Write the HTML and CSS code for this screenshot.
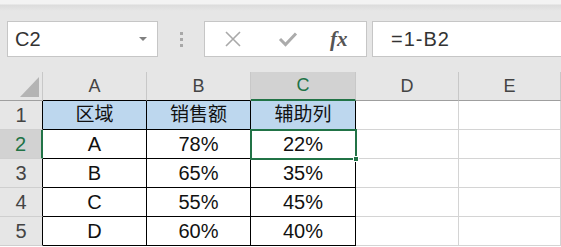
FILE: index.html
```html
<!DOCTYPE html>
<html lang="zh-CN">
 <head>
  <meta charset="utf-8">
  <title>辅助列</title>
  <link rel="stylesheet" href="styles.css">
 </head>
 <body>
  <div class="bar">
	<div class="namebox">
		<span class="ref">C2</span>
		<span class="drop"></span>
	</div>
	<div class="grip"><i></i><i></i><i></i></div>
	<div class="tools">
		<svg class="ico" width="18" height="18" viewBox="0 0 18 18"><path d="M2 2L16 16M16 2L2 16" stroke="#a9a9a9" stroke-width="1.6" fill="none"/></svg>
		<svg class="ico" width="20" height="18" viewBox="0 0 20 18"><path d="M2 9L7.5 14.5L18 3.5" stroke="#ababab" stroke-width="3" fill="none"/></svg>
		<span class="fx">fx</span>
	</div>
	<div class="formula">=1-B2</div>
  </div>
  <div class="sheet">
	<div class="corner"><span></span></div>
	<div class="col">A</div>
	<div class="col">B</div>
	<div class="col on">C</div>
	<div class="col">D</div>
	<div class="col">E</div>

	<div class="row">1</div>
	<div class="c t hd">区域</div>
	<div class="c t hd">销售额</div>
	<div class="c t hd">辅助列</div>
	<div class="c"></div>
	<div class="c"></div>

	<div class="row on">2</div>
	<div class="c t">A</div>
	<div class="c t">78%</div>
	<div class="c t sel">22%<span class="handle"></span></div>
	<div class="c"></div>
	<div class="c"></div>

	<div class="row">3</div>
	<div class="c t">B</div>
	<div class="c t">65%</div>
	<div class="c t">35%</div>
	<div class="c"></div>
	<div class="c"></div>

	<div class="row">4</div>
	<div class="c t">C</div>
	<div class="c t">55%</div>
	<div class="c t">45%</div>
	<div class="c"></div>
	<div class="c"></div>

	<div class="row">5</div>
	<div class="c t">D</div>
	<div class="c t">60%</div>
	<div class="c t">40%</div>
	<div class="c"></div>
	<div class="c"></div>
  </div>
 </body>
</html>
```

FILE: styles.css
```css
*{margin:0;padding:0;box-sizing:border-box;}
body{
	width:561px;
	height:247px;
	overflow:hidden;
	background:#fff;
	font-family:"Liberation Sans","Noto Sans CJK SC",sans-serif;
}
.bar{
	height:72px;
	background:linear-gradient(#f3f3f3 0,#f3f3f3 4px,#dcdcdc 5px,#e6e6e6 11px,#e6e6e6 100%);
	display:flex;
	align-items:flex-start;
	padding-top:21px;
	padding-left:7px;
}
.namebox{
	width:151px;
	height:36px;
	background:#fff;
	border:1px solid #c6c6c6;
	display:flex;
	align-items:center;
	justify-content:space-between;
	padding:0 10px 0 7px;
}
.ref{
	font-size:20px;
	color:#333;
}
.drop{
	width:0;
	height:0;
	border-left:4px solid transparent;
	border-right:4px solid transparent;
	border-top:4px solid #808080;
}
.grip{
	width:46px;
	height:36px;
	display:flex;
	flex-direction:column;
	align-items:center;
	justify-content:center;
	gap:3px;
}
.grip i{
	display:block;
	width:3px;
	height:3px;
	background:#a8a8a8;
}
.tools{
	width:163px;
	height:36px;
	background:#fff;
	border:1px solid #c6c6c6;
	display:flex;
	align-items:center;
	padding-left:19px;
	gap:36px;
}
.fx{
	font-family:"Liberation Serif",serif;
	font-style:italic;
	font-weight:bold;
	font-size:21px;
	color:#555;
	margin-left:-4px;
}
.formula{
	margin-left:5px;
	flex:1;
	height:36px;
	background:#fff;
	border:1px solid #c6c6c6;
	border-right:none;
	font-size:20px;
	letter-spacing:1px;
	color:#333;
	line-height:34px;
	padding-left:18px;
}
.sheet{
	display:grid;
	grid-template-columns:43px 104px 104px 105px 103px 1fr;
	grid-template-rows:repeat(6,29px);
	background:#fff;
}
.sheet > div{
	border-right:1px solid #d4d4d4;
	border-bottom:1px solid #d4d4d4;
}
.corner{
	background:#e6e6e6;
	position:relative;
	border-bottom-color:#9f9f9f !important;
	border-right-color:#c8c8c8 !important;
}
.corner span{
	position:absolute;
	right:3px;
	bottom:3px;
	width:0;
	height:0;
	border-left:19px solid transparent;
	border-bottom:20px solid #b4b4b4;
}
.col{
	background:#e6e6e6;
	border-bottom-color:#9f9f9f !important;
	border-right-color:#c8c8c8 !important;
	text-align:center;
	font-size:18px;
	line-height:28px;
	color:#444;
}
.col:nth-child(2),.col:nth-child(3){
	border-bottom-color:#000 !important;
}
.col.on{
	background:#d2d2d2;
	color:#217346;
	border-bottom:2px solid #217346 !important;
	line-height:27px;
}
.row{
	background:#e6e6e6;
	border-bottom-color:#cfcfcf !important;
	border-right-color:#000 !important;
	text-align:center;
	font-size:20px;
	line-height:28px;
	color:#444;
}
.row.on{
	background:#d2d2d2;
	color:#217346;
	border-right:2px solid #217346 !important;
}
.c.t{
	border-right-color:#000;
	border-bottom-color:#000;
	text-align:center;
	font-size:20px;
	line-height:28px;
	color:#111;
}
.c.hd{
	background:#bdd7ee;
	font-size:19px;
}
.c.sel{
	position:relative;
	outline:2px solid #217346;
	outline-offset:-1px;
}
.handle{
	position:absolute;
	right:-4px;
	bottom:-4px;
	width:6px;
	height:6px;
	background:#217346;
	border:1px solid #fff;
}
```
